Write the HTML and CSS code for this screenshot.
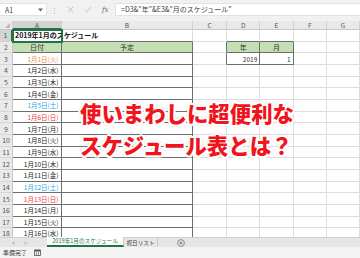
FILE: index.html
```html
<!DOCTYPE html>
<html lang="ja">
<head>
<meta charset="utf-8">
<title>スケジュール表</title>
<link rel="stylesheet" href="styles.css">
</head>
<body>
<div class="app">
  <div class="fbar">
    <div class="namebox"><span>A1</span>
      <svg class="dd" width="5" height="4" viewBox="0 0 5 4"><path d="M0 0.5 L5 0.5 L2.5 3.5 Z" fill="#666"/></svg>
    </div>
    <div class="fsep">⋮</div>
    <div class="ficons">
      <svg width="7" height="7" viewBox="0 0 7 7"><path d="M1 1 L6 6 M6 1 L1 6" stroke="#b5b5b5" stroke-width="0.8"/></svg>
      <svg width="8" height="7" viewBox="0 0 8 7"><path d="M1 3.8 L3 5.8 L7 1" stroke="#b5b5b5" stroke-width="0.8" fill="none"/></svg>
      <span class="fx">fx</span>
    </div>
    <div class="formula">=D3&amp;"年"&amp;E3&amp;"月のスケジュール"</div>
  </div>
  <div class="sheetwrap">
    <div class="sheet">
      <div class="ch corner"></div><div class="ch sel">A</div><div class="ch">B</div><div class="ch">C</div><div class="ch">D</div><div class="ch">E</div><div class="ch">F</div><div class="ch">G</div>

      <div class="rh rsel">1</div><div class="c a1 tb"><span class="title">2019年1月のスケジュール</span></div><div class="c tb"></div><div class="c"></div><div class="c tb"></div><div class="c tb"></div><div class="c"></div><div class="c"></div>

      <div class="rh">2</div><div class="c t g">日付</div><div class="c t g">予定</div><div class="c tr"></div><div class="c t g">年</div><div class="c t g">月</div><div class="c"></div><div class="c"></div>

      <div class="rh">3</div><div class="c t d hol">1月1日(火)</div><div class="c t"></div><div class="c tr"></div><div class="c t n">2019</div><div class="c t n">1</div><div class="c"></div><div class="c"></div>

      <div class="rh">4</div><div class="c t d">1月2日(水)</div><div class="c t"></div><div class="c"></div><div class="c"></div><div class="c"></div><div class="c"></div><div class="c"></div>
      <div class="rh">5</div><div class="c t d">1月3日(木)</div><div class="c t"></div><div class="c"></div><div class="c"></div><div class="c"></div><div class="c"></div><div class="c"></div>
      <div class="rh">6</div><div class="c t d">1月4日(金)</div><div class="c t"></div><div class="c"></div><div class="c"></div><div class="c"></div><div class="c"></div><div class="c"></div>
      <div class="rh">7</div><div class="c t d sat">1月5日(土)</div><div class="c t"></div><div class="c"></div><div class="c"></div><div class="c"></div><div class="c"></div><div class="c"></div>
      <div class="rh">8</div><div class="c t d sun">1月6日(日)</div><div class="c t"></div><div class="c"></div><div class="c"></div><div class="c"></div><div class="c"></div><div class="c"></div>
      <div class="rh">9</div><div class="c t d">1月7日(月)</div><div class="c t"></div><div class="c"></div><div class="c"></div><div class="c"></div><div class="c"></div><div class="c"></div>
      <div class="rh">10</div><div class="c t d">1月8日(火)</div><div class="c t"></div><div class="c"></div><div class="c"></div><div class="c"></div><div class="c"></div><div class="c"></div>
      <div class="rh">11</div><div class="c t d">1月9日(水)</div><div class="c t"></div><div class="c"></div><div class="c"></div><div class="c"></div><div class="c"></div><div class="c"></div>
      <div class="rh">12</div><div class="c t d">1月10日(木)</div><div class="c t"></div><div class="c"></div><div class="c"></div><div class="c"></div><div class="c"></div><div class="c"></div>
      <div class="rh">13</div><div class="c t d">1月11日(金)</div><div class="c t"></div><div class="c"></div><div class="c"></div><div class="c"></div><div class="c"></div><div class="c"></div>
      <div class="rh">14</div><div class="c t d sat">1月12日(土)</div><div class="c t"></div><div class="c"></div><div class="c"></div><div class="c"></div><div class="c"></div><div class="c"></div>
      <div class="rh">15</div><div class="c t d sun">1月13日(日)</div><div class="c t"></div><div class="c"></div><div class="c"></div><div class="c"></div><div class="c"></div><div class="c"></div>
      <div class="rh">16</div><div class="c t d">1月14日(月)</div><div class="c t"></div><div class="c"></div><div class="c"></div><div class="c"></div><div class="c"></div><div class="c"></div>
      <div class="rh">17</div><div class="c t d">1月15日(火)</div><div class="c t"></div><div class="c"></div><div class="c"></div><div class="c"></div><div class="c"></div><div class="c"></div>
      <div class="rh">18</div><div class="c t d">1月16日(水)</div><div class="c t"></div><div class="c"></div><div class="c"></div><div class="c"></div><div class="c"></div><div class="c"></div>
    </div>
  </div>
  <div class="tabbar">
    <div class="tabnav"><span>◀</span><span>▶</span></div>
    <div class="tab active">2019年1月のスケジュール</div>
    <div class="tab">祝日リスト</div>
    <div class="addtab">
      <svg width="8" height="8" viewBox="0 0 8 8"><circle cx="4" cy="4" r="3.4" fill="none" stroke="#777" stroke-width="0.8"/><path d="M4 2.2 V5.8 M2.2 4 H5.8" stroke="#777" stroke-width="0.8"/></svg>
    </div>
  </div>
  <div class="status">
    <span>準備完了</span>
    <svg class="sicon" width="7" height="7" viewBox="0 0 7 7"><rect x="0.5" y="1.5" width="6" height="5" fill="none" stroke="#555" stroke-width="0.8"/><rect x="0.5" y="0.5" width="6" height="2" fill="#555"/><path d="M2.5 3 V6.5 M4.5 3 V6.5" stroke="#555" stroke-width="0.6"/></svg>
  </div>
  <div class="overlay">
    <div>使いまわしに超便利な</div>
    <div>スケジュール表とは？</div>
  </div>
</div>
</body>
</html>
```

FILE: styles.css
```css
body {
  margin: 0;
  width: 360px;
  height: 258px;
  overflow: hidden;
  background: #fff;
  font-family: "Noto Sans CJK JP", "Noto Sans", sans-serif;
  color: #222;
}
.app {
  position: relative;
  display: flex;
  flex-direction: column;
  height: 258px;
}
.fbar {
  height: 21px;
  flex: none;
  box-sizing: border-box;
  background: #f1f1f1;
  display: flex;
  align-items: flex-start;
  padding-top: 3px;
}
.namebox {
  width: 47px;
  height: 13px;
  box-sizing: border-box;
  background: #fff;
  border: 1px solid #e2e2e2;
  border-left: none;
  display: flex;
  align-items: center;
  justify-content: space-between;
  padding: 0 3px 0 5px;
  font-size: 7px;
  color: #444;
}
.fsep {
  width: 14px;
  height: 13px;
  display: flex;
  align-items: center;
  justify-content: center;
  font-size: 7px;
  color: #aaa;
}
.ficons {
  display: flex;
  align-items: center;
  gap: 10px;
  height: 13px;
  width: 54px;
  padding-left: 6px;
  box-sizing: border-box;
}
.fx {
  font-family: "DejaVu Serif", serif;
  font-style: italic;
  font-size: 7px;
  color: #666;
}
.formula {
  flex: 1;
  height: 13px;
  box-sizing: border-box;
  background: #fff;
  border: 1px solid #e2e2e2;
  border-right: none;
  font-size: 7px;
  line-height: 11px;
  padding-left: 5px;
  color: #444;
  white-space: nowrap;
}
.sheetwrap {
  flex: 1;
  overflow: hidden;
}
.sheet {
  display: grid;
  grid-template-columns: 13px 49px 131px 34px 33.3px 33.3px 33.3px 33.3px;
  grid-template-rows: 9px repeat(18, 11.67px);
}
.ch {
  background: #e9e9e9;
  border-right: 1px solid #d0d0d0;
  border-bottom: 1px solid #c6c6c6;
  box-sizing: border-box;
  font-size: 6.5px;
  color: #555;
  display: flex;
  align-items: center;
  justify-content: center;
}
.ch.sel {
  background: #d3d3d3;
  border-bottom: 2px solid #217346;
  color: #1e6b3f;
}
.corner {
  position: relative;
}
.corner::after {
  content: "";
  position: absolute;
  right: 2px;
  bottom: 1px;
  border-left: 5px solid transparent;
  border-bottom: 5px solid #b9b9b9;
}
.rh {
  background: #e9e9e9;
  border-right: 1px solid #c6c6c6;
  border-bottom: 1px solid #d6d6d6;
  box-sizing: border-box;
  font-size: 6.8px;
  color: #555;
  display: flex;
  align-items: center;
  justify-content: center;
}
.rh.rsel {
  background: #d3d3d3;
  border-right: 2px solid #217346;
  color: #1e6b3f;
}
.c {
  box-sizing: border-box;
  border-right: 1px solid #dedede;
  border-bottom: 1px solid #dedede;
  font-size: 7px;
  display: flex;
  align-items: center;
  padding: 0 2px;
  white-space: nowrap;
  min-width: 0;
}
.c.t {
  border-right-color: #6e6e6e;
  border-bottom-color: #6e6e6e;
}
.c.tb {
  border-bottom-color: #6e6e6e;
}
.c.tr {
  border-right-color: #6e6e6e;
}
.c.g {
  background: #c4dfb1;
  justify-content: center;
  color: #333;
}
.c.d, .c.n {
  justify-content: flex-end;
}
.c.d {
  font-size: 6.5px;
  padding-right: 2.5px;
}
.c.n {
  color: #333;
  font-size: 6.5px;
}
.c.hol { color: #ef8c4e; }
.c.sat { color: #1aa9e8; }
.c.sun { color: #f2383d; }
.a1 {
  position: relative;
  z-index: 1;
  outline: 2px solid #217346;
  outline-offset: -1px;
  overflow: visible;
}
.title {
  font-weight: 700;
  color: #111;
}
.tabbar {
  height: 10px;
  flex: none;
  background: #e6e6e6;
  border-top: 1px solid #d0d0d0;
  box-sizing: border-box;
  display: flex;
  align-items: stretch;
  font-size: 5.6px;
  color: #444;
}
.tabnav {
  width: 47px;
  display: flex;
  align-items: center;
  gap: 9px;
  padding-left: 11px;
  box-sizing: border-box;
  font-size: 4px;
  color: #c4c4c4;
}
.tab {
  display: flex;
  align-items: center;
  justify-content: center;
  border-right: 1px solid #c8c8c8;
  box-sizing: border-box;
  width: 34px;
}
.tab.active {
  width: 77px;
  background: #fff;
  color: #217346;
  border-bottom: 2px solid #217346;
  margin-top: -1px;
}
.addtab {
  display: flex;
  align-items: center;
  padding-left: 19px;
}
.status {
  height: 11px;
  flex: none;
  background: #f3f3f3;
  display: flex;
  align-items: center;
  gap: 7px;
  padding-left: 3px;
  font-size: 6px;
  color: #333;
}
.overlay {
  position: absolute;
  left: 80px;
  top: 97px;
  font-size: 21.4px;
  line-height: 32px;
  font-weight: 900;
  color: #f2141c;
  white-space: nowrap;
  text-shadow:
    2px 0 0 #fff, -2px 0 0 #fff, 0 2px 0 #fff, 0 -2px 0 #fff,
    1.5px 1.5px 0 #fff, -1.5px 1.5px 0 #fff, 1.5px -1.5px 0 #fff, -1.5px -1.5px 0 #fff,
    0 0 4px rgba(0,0,0,0.35);
}
```
